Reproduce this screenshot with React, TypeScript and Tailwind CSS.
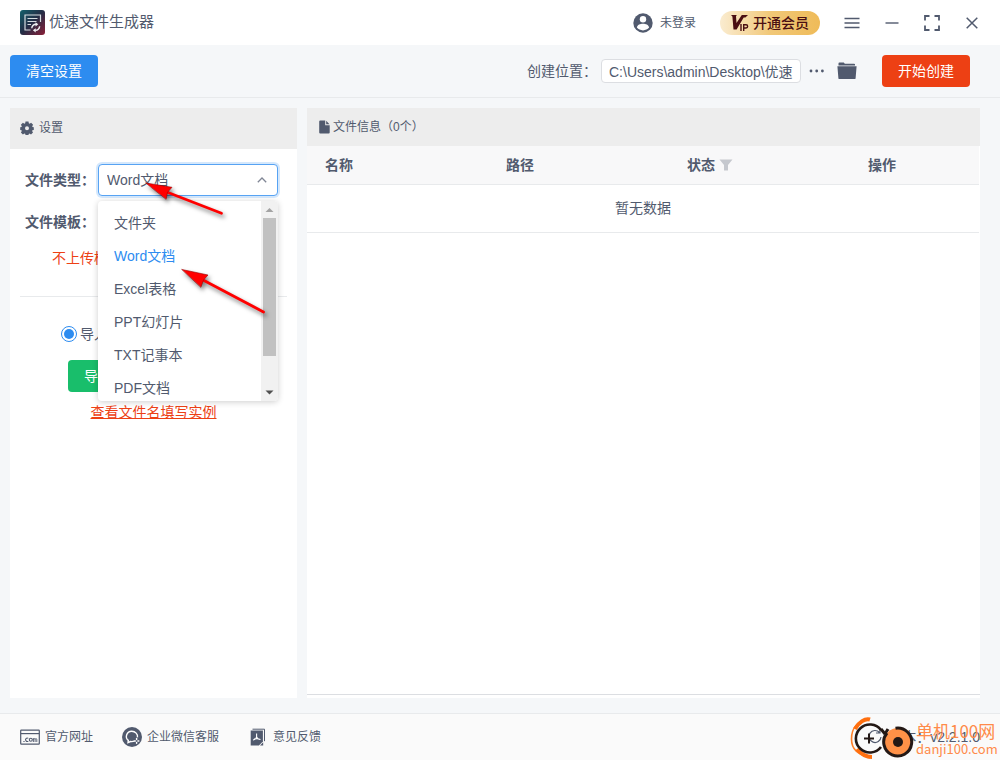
import React, { useState } from "react";

const FILE_TYPES = ["文件夹", "Word文档", "Excel表格", "PPT幻灯片", "TXT记事本", "PDF文档"];

const LogoIcon = () => (
  <svg width="25" height="25" viewBox="0 0 25 25" fill="none" aria-hidden="true">
    <defs>
      <linearGradient id="logo-bg" x1="0" y1="0" x2="1" y2="1">
        <stop offset="0" stopColor="#12616c" />
        <stop offset="0.5" stopColor="#252c45" />
        <stop offset="1" stopColor="#8c2038" />
      </linearGradient>
    </defs>
    <rect width="25" height="25" rx="3" fill="url(#logo-bg)" />
    <path d="M10.500 20H5V5h15.500v7" stroke="#d5dbe0" strokeWidth="1.200" />
    <path d="M7.500 8.500h10M7.500 11.500h9M7.500 14.500h3.500" stroke="#d5dbe0" strokeWidth="1.200" />
    <path d="M11.800 18.200a4 4 0 0 1 4.200-3.900M19.600 16.300a4 4 0 0 1-4.300 4" stroke="#eef0f2" strokeWidth="1.400" />
    <path d="M15.500 12.200l2.800 2.100-2.800 2.100zM15.700 22.400l-2.800-2.100 2.800-2.100z" fill="#eef0f2" />
  </svg>
);

const UserIcon = () => (
  <svg width="20" height="20" viewBox="0 0 20 20" aria-hidden="true">
    <circle cx="10" cy="10" r="9.700" fill="#515a6e" />
    <circle cx="10" cy="6.300" r="3.200" fill="#fff" />
    <path d="M3.900 14.600c.5-2.800 3.400-3.800 6.100-3.800s5.600 1 6.100 3.800c-1.500 1.800-3.700 2.800-6.100 2.800s-4.600-1-6.100-2.800z" fill="#fff" />
  </svg>
);

const VipIcon = () => (
  <svg width="18" height="18" viewBox="0 0 18 18" aria-hidden="true">
    <path d="M0 1h5.800l-.8 1.200.5 6.800L10.800 1H17l-2.600 2.400h-1.700L5.600 15.600H2.500L1.400 2.400z" fill="#4a0e12" />
    <path d="M10 10v7M12.700 17v-6.300h2.300a1.500 1.500 0 0 1 0 3.300h-2.300" stroke="#4a0e12" strokeWidth="1.400" fill="none" />
  </svg>
);

const GearIcon = () => (
  <svg width="14" height="14" viewBox="0 0 14 14" aria-hidden="true">
    <path
      fillRule="evenodd"
      fill="#515a6e"
      d="M5.500.6h3l.3 1.700.8.400 1.500-1 2 2-.9 1.500.3.800 1.300.2v2.700l-1.400.3-.3.900.9 1.400-2 2-1.500-.9-.8.300-.2 1.100h-3l-.3-1.200-.8-.3-1.500 1-2-2 .9-1.400-.3-.9L.2 8.900V6.200L1.500 6l.3-.8-.9-1.500 2-2 1.500 1 .8-.4zM7 5.300a2 2 0 1 0 0 4 2 2 0 0 0 0-4z"
    />
  </svg>
);

const FileIcon = () => (
  <svg width="11" height="14" viewBox="0 0 11 14" aria-hidden="true">
    <path d="M1.200.5h5v4.700h4.500v7.300a1 1 0 0 1-1 1h-8.500a1 1 0 0 1-1-1v-11a1 1 0 0 1 1-1z" fill="#515a6e" />
    <path d="M7.200.7l3.300 3.500H7.200z" fill="#515a6e" />
  </svg>
);

const FolderIcon = () => (
  <svg width="20" height="18" viewBox="0 0 20 18" aria-hidden="true">
    <path d="M1.500 3.500V1.400A.9.900 0 0 1 2.400.5h4.400l1 1.200h9.300a.9.900 0 0 1 .9.900v.9z" fill="#515a6e" />
    <path d="M.4 4.200h19.200l-1 12a1 1 0 0 1-1 .9H2.400a1 1 0 0 1-1-.9z" fill="#515a6e" />
  </svg>
);

const SiteIcon = () => (
  <svg width="20" height="20" viewBox="0 0 20 20" fill="none" stroke="#515a6e" aria-hidden="true">
    <rect x=".7" y="3.200" width="18.600" height="14" rx=".6" strokeWidth="1.200" />
    <path d="M.7 6.600h18.600" strokeWidth="1.200" />
    <path d="M3.400 14.500h1.200M8.300 11.400a1.700 1.700 0 1 0 0 2.700" strokeWidth="1.100" />
    <circle cx="10.800" cy="12.800" r="1.500" strokeWidth="1.100" />
    <path d="M13.400 15v-3.800M13.400 12.500c.2-1.300 1.700-1.300 1.700.1V15M15.100 12.500c.2-1.300 1.700-1.300 1.700.1V15" strokeWidth=".9" />
  </svg>
);

const ServiceIcon = () => (
  <svg width="20" height="20" viewBox="0 0 20 20" fill="none" aria-hidden="true">
    <circle cx="10" cy="10" r="10" fill="#515a6e" />
    <path d="M12.300 14.200a6.500 5.500 0 0 1-3.800.3L6 15.600l.3-2.200C2.500 10.200 4.700 4.300 9.700 4.300c3.700 0 6.300 2.900 5.800 6" stroke="#fff" strokeWidth="1.400" />
    <path d="M14.600 11.600v1M14.600 15.400v.9M12.400 14h.9M15.900 14h.9" stroke="#fff" strokeWidth="1.500" strokeLinecap="round" />
  </svg>
);

const FeedbackIcon = () => (
  <svg width="20" height="20" viewBox="0 0 20 20" fill="none" aria-hidden="true">
    <path d="M4.500 2.200h12v12" stroke="#515a6e" strokeWidth="1" />
    <path d="M2.700 3.400h12.200v11l-4 4.200H2.700z" fill="#515a6e" />
    <path d="M12 18.600l3.200-3.300v3.300z" fill="#515a6e" />
    <path d="M8.600 6.500v3.300M8.600 9.800c.3 1.500 1.700 2.500 3.900 2.700M8.600 9.800c-.3 1.600-1.400 2.800-3.600 3.200M6 12.200c1.700-.7 3.700-.7 5.300-.2" stroke="#fff" strokeWidth="1.100" />
  </svg>
);

const FOOTER_LINKS = [
  { title: "官方网址", icon: <SiteIcon /> },
  { title: "企业微信客服", icon: <ServiceIcon /> },
  { title: "意见反馈", icon: <FeedbackIcon /> },
];

const TitleBar = () => (
  <header className="flex h-[45px] items-center bg-white pl-5 pr-2">
    <LogoIcon />
    <h1 className="ml-1 text-[15px]">优速文件生成器</h1>
    <button className="ml-auto flex items-center gap-[7px] text-xs">
      <UserIcon />
      未登录
    </button>
    <button className="ml-6 flex h-6 w-[100px] items-center gap-1 rounded-full bg-linear-to-r from-[#faecd0] via-[#f1c878] to-[#efbb58] pl-[11px] text-sm font-medium text-[#4a0e12]">
      <VipIcon />
      开通会员
    </button>
    <div className="ml-3 flex">
      <button aria-label="菜单" className="flex h-8 w-10 items-center justify-center">
        <svg width="16" height="12" viewBox="0 0 16 12" stroke="#515a6e" strokeWidth="1.300">
          <path d="M.5 1.500h15M.5 6h15M.5 10.500h15" />
        </svg>
      </button>
      <button aria-label="最小化" className="flex h-8 w-10 items-center justify-center">
        <svg width="14" height="2" viewBox="0 0 14 2" stroke="#515a6e" strokeWidth="1.400">
          <path d="M.5 1h13" />
        </svg>
      </button>
      <button aria-label="全屏" className="flex h-8 w-10 items-center justify-center">
        <svg width="16" height="16" viewBox="0 0 16 16" fill="none" stroke="#515a6e" strokeWidth="1.800">
          <path d="M1 5.500V1h4.500M10.500 1H15v4.500M15 10.500V15h-4.500M5.500 15H1v-4.500" />
        </svg>
      </button>
      <button aria-label="关闭" className="flex h-8 w-10 items-center justify-center">
        <svg width="12" height="12" viewBox="0 0 12 12" stroke="#515a6e" strokeWidth="1.500">
          <path d="M.7.7l10.600 10.600M11.300.7L.7 11.300" />
        </svg>
      </button>
    </div>
  </header>
);

const Toolbar = () => (
  <div className="flex h-[53px] items-center border-b border-[#e8eaec] pl-[10px] pr-[30px] text-sm">
    <button className="h-8 rounded bg-[#2d8cf0] px-4 text-white">清空设置</button>
    <label htmlFor="path" className="ml-auto">
      创建位置：
    </label>
    <input
      id="path"
      readOnly
      value="C:\Users\admin\Desktop\优速"
      className="ml-1 h-6 w-[200px] rounded-sm border border-[#dcdee2] bg-white px-[7px] outline-none"
    />
    <button aria-label="更多" className="ml-2 flex h-6 w-4 items-center">
      <svg width="16" height="4" viewBox="0 0 16 4" fill="#515a6e">
        <circle cx="2" cy="2" r="1.400" />
        <circle cx="7.700" cy="2" r="1.400" />
        <circle cx="13.400" cy="2" r="1.400" />
      </svg>
    </button>
    <button aria-label="打开文件夹" className="ml-3">
      <FolderIcon />
    </button>
    <button className="ml-[25px] h-8 rounded bg-[#ed4014] px-4 text-white">开始创建</button>
  </div>
);

interface MenuProps {
  value: string;
  onPick: (type: string) => void;
}

const TypeMenu = ({ value, onPick }: MenuProps) => (
  <div className="absolute left-0 top-full z-10 mt-[5px] flex h-[200px] w-full overflow-hidden rounded bg-white shadow-[0_1px_6px_rgba(0,0,0,0.2)]">
    <ul className="flex-1 overflow-hidden pt-[5px]">
      {FILE_TYPES.map((type) => (
        <li key={type}>
          <button
            onClick={() => onPick(type)}
            className={`block h-[33px] w-full px-4 text-left ${type === value ? "text-[#2d8cf0]" : ""}`}
          >
            {type}
          </button>
        </li>
      ))}
    </ul>
    {/* Scrollbar */}
    <div aria-hidden="true" className="flex w-[17px] flex-col items-center bg-[#f1f1f1]">
      <svg width="17" height="17" viewBox="0 0 17 17" fill="#a3a3a3">
        <path d="M4.500 11h8l-4-4z" />
      </svg>
      <div className="h-[138px] w-[13px] bg-[#c1c1c1]" />
      <svg className="mt-auto" width="17" height="17" viewBox="0 0 17 17" fill="#505050">
        <path d="M4.500 6.500h8l-4 4z" />
      </svg>
    </div>
  </div>
);

const SettingsPanel = () => {
  const [type, setType] = useState("Word文档");

  return (
    <section className="flex w-[287px] shrink-0 flex-col bg-white text-sm">
      <h2 className="flex h-[41px] items-center gap-[5px] bg-[#ededed] pb-[2px] pl-[10px] text-xs">
        <GearIcon />
        设置
      </h2>

      <div className="flex items-center pl-[15px] pt-[15px]">
        <label htmlFor="type" className="w-[73px] font-bold">
          文件类型：
        </label>
        <div className="relative w-[180px]">
          <select
            id="type"
            value={type}
            onChange={(e) => setType(e.target.value)}
            className="block h-8 w-full appearance-none rounded border border-[#57a3f3] bg-white px-2 shadow-[0_0_0_2px_rgba(45,140,240,0.2)] outline-none"
          >
            {FILE_TYPES.map((item) => (
              <option key={item}>{item}</option>
            ))}
          </select>
          <svg
            className="pointer-events-none absolute right-[11px] top-[13px]"
            width="10"
            height="6"
            viewBox="0 0 10 6"
            fill="none"
            stroke="#808695"
            strokeWidth="1.300"
            aria-hidden="true"
          >
            <path d="M.8 5.200L5 1l4.200 4.200" />
          </svg>
          <TypeMenu value={type} onPick={setType} />
        </div>
      </div>

      <p className="mt-4 pl-[15px] font-bold">文件模板：</p>
      <p className="mt-4 pl-[42px] text-[#ed4014]">不上传模板</p>
      <hr className="mx-[10px] mt-7 border-[#e8eaec]" />

      <label className="mt-[27px] flex items-center gap-[3px] pl-[51px]">
        <input
          type="radio"
          name="source"
          defaultChecked
          className="size-4 appearance-none rounded-full border border-[#2d8cf0] bg-[#2d8cf0] bg-clip-content p-[2px]"
        />
        导入
      </label>
      <button className="ml-[58px] mt-4 h-8 self-start rounded bg-[#19be6b] px-4 text-white">导入</button>
      <a href="#example" className="mt-[10px] self-center text-[#ed4014] underline">
        查看文件名填写实例
      </a>
    </section>
  );
};

const FilePanel = () => (
  <section className="flex flex-1 flex-col bg-white pb-[3px]">
    <h2 className="flex h-[38px] items-center gap-[3px] bg-[#ededed] pl-3 text-xs">
      <FileIcon />
      文件信息（0个）
    </h2>
    <div className="flex-1 border-b border-[#dcdee2] pr-px">
      <table className="w-full table-fixed text-left text-sm">
        <thead>
          <tr className="h-[38px] border-b border-[#e8eaec] bg-[#f8f8f9]">
            <th className="w-[181px] pl-[18px]">名称</th>
            <th className="w-[181px] pl-[18px]">路径</th>
            <th className="w-[181px] pl-[18px]">
              <span className="flex items-center gap-1">
                状态
                <svg width="14" height="12" viewBox="0 0 14 12" fill="#c5c8ce" aria-hidden="true">
                  <path d="M.5.500h13L9 6v5.500H5V6z" />
                </svg>
              </span>
            </th>
            <th className="pl-[18px]">操作</th>
          </tr>
        </thead>
        <tbody>
          <tr className="h-12 border-b border-[#e8eaec]">
            <td colSpan={4} className="text-center">
              暂无数据
            </td>
          </tr>
        </tbody>
      </table>
    </div>
  </section>
);

const Watermark = () => (
  <div className="pointer-events-none absolute bottom-0 right-0 flex items-end gap-[2px] font-['Noto_Sans_CJK_SC',sans-serif] text-[#ff8b4a]">
    <svg width="64" height="44" viewBox="0 0 64 44" fill="none">
      <path d="M18 3C8 5 1.500 12 1.500 23S8 38 20 42" stroke="#ff7f27" strokeWidth="1.600" />
      <path d="M5 13C9 6 15 2 20 3.500M7 33c4 5 8 8 15 8" stroke="#ff6f0f" strokeWidth="4" />
      <path d="M31 14A14 14 0 1 0 31 31" stroke="#231815" strokeWidth="2.600" />
      <path d="M14 22.500h10M19 17.500v10" stroke="#231815" strokeWidth="2" />
      <path d="M31 13l4 5M38 13l-3 5" stroke="#231815" strokeWidth="3" />
      <circle cx="48" cy="26" r="14" fill="#ff9147" />
      <path d="M45.500 12.200A14 14 0 1 1 37 17" stroke="#231815" strokeWidth="3" />
      <circle cx="48" cy="26" r="5" fill="#231815" />
    </svg>
    <div className="w-[84px] whitespace-nowrap pb-[2px]">
      <p className="text-[17px] leading-[18px]">单机100网</p>
      <p className="text-[13px] leading-[18px]">danji100.com</p>
    </div>
  </div>
);

const Footer = () => (
  <footer className="relative flex h-[47px] items-center border-t border-[#e8eaec] bg-[#fafafa] px-5 text-xs">
    <nav className="flex gap-[29px]">
      {FOOTER_LINKS.map((item) => (
        <a key={item.title} href="#contact" className="flex items-center gap-[5px]">
          {item.icon}
          {item.title}
        </a>
      ))}
    </nav>
    <p className="ml-auto flex items-center gap-[5px] text-sm">
      <svg width="16" height="16" viewBox="0 0 16 16" fill="none" stroke="#515a6e" strokeWidth="1.200">
        <path d="M12.500 3.500A6 6 0 1 0 14 8M13 0v4H9" />
      </svg>
      版本：v2.2.1.0
    </p>
    <Watermark />
  </footer>
);

/* Red pointers drawn over the drop-down */
const Pointers = () => (
  <svg
    className="pointer-events-none absolute left-[140px] top-[175px] z-20 drop-shadow-[2px_3px_2px_rgba(0,0,0,0.5)]"
    width="135"
    height="145"
    viewBox="140 175 135 145"
    fill="#ff0000"
    stroke="#ff0000"
    strokeLinecap="round"
    aria-hidden="true"
  >
    <path d="M168 192.500L221.500 213.300" strokeWidth="2.800" />
    <path d="M146 183l26 4.300-4.500 5-1.300 6.700z" stroke="#900" strokeWidth=".6" />
    <path d="M204 280.500L263.500 312" strokeWidth="2.800" />
    <path d="M182 269.500l26 5.500-4.500 5-2.500 7z" stroke="#900" strokeWidth=".6" />
  </svg>
);

const App = () => {
  return (
    <div className="relative flex min-h-screen flex-col bg-[#f5f7f9] font-['Liberation_Sans','Noto_Sans_CJK_SC',sans-serif] text-[#515a6e]">
      <TitleBar />
      <Toolbar />
      <main className="flex flex-1 gap-[10px] pb-[15px] pl-[10px] pr-5 pt-[10px]">
        <SettingsPanel />
        <FilePanel />
      </main>
      <Footer />
      <Pointers />
    </div>
  );
};

export default App;
